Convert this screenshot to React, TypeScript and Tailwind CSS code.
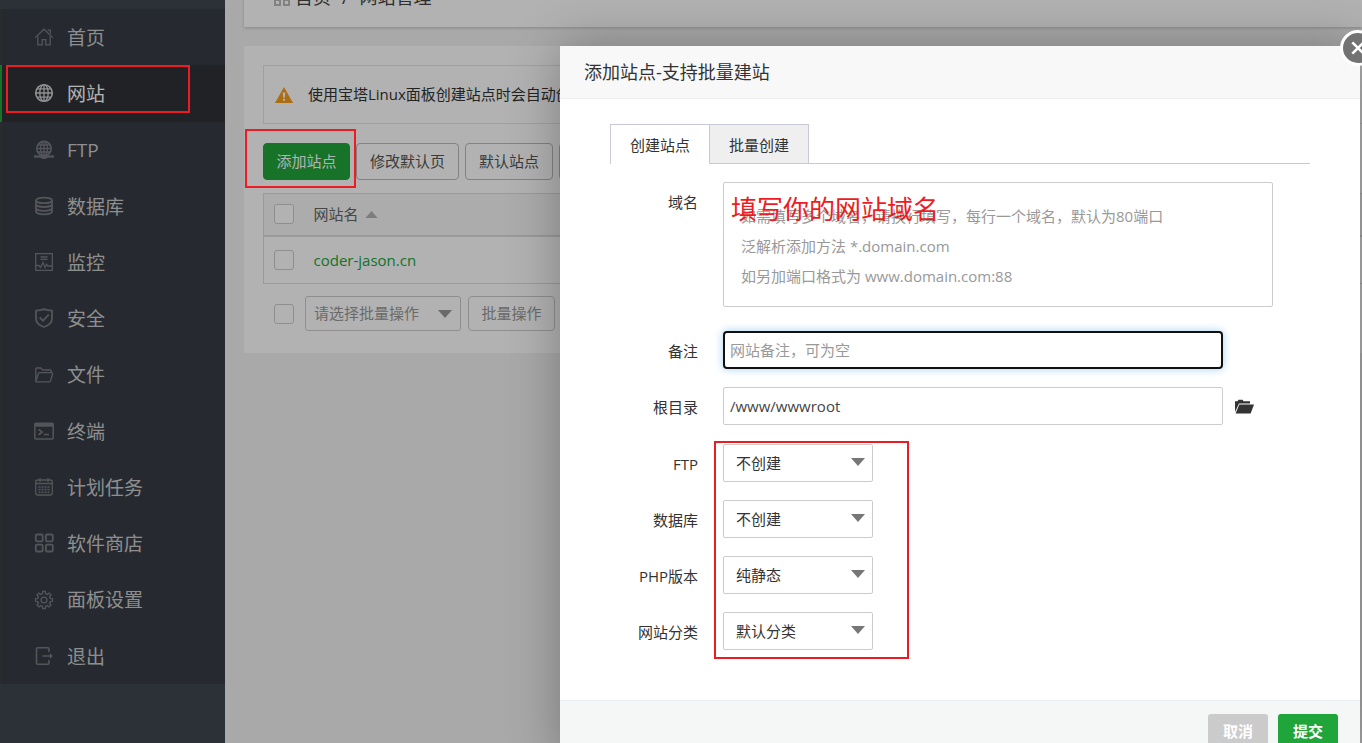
import React from "react";

type IconProps = { children: React.ReactNode };

function Icon({ children }: IconProps) {
  return (
    <svg
      aria-hidden="true"
      viewBox="0 0 20 20"
      className="size-5 shrink-0"
      fill="none"
      stroke="currentColor"
      strokeWidth="1.3"
    >
      {children}
    </svg>
  );
}

const menu: { label: string; icon: React.ReactNode; active?: boolean }[] = [
  {
    label: "首页",
    icon: (
      <>
        <path d="M1.2 10.6 10 2.2l8.8 8.4M3.8 9.4v8.4h4.4v-5.2h3.6v5.2h4.4V9.4M13.6 3.2h2.8v3.6" />
      </>
    ),
  },
  {
    label: "网站",
    active: true,
    icon: (
      <>
        <circle cx="10" cy="10" r="8.3" strokeWidth="1.6" />
        <ellipse cx="10" cy="10" rx="4.2" ry="8.3" />
        <path d="M10 1.7v16.6M1.7 10h16.6M3 5.9h14M3 14.1h14" />
      </>
    ),
  },
  {
    label: "FTP",
    icon: (
      <>
        <circle cx="10" cy="8.5" r="7.2" strokeWidth="1.6" />
        <ellipse cx="10" cy="8.5" rx="3.5" ry="7.2" />
        <path d="M10 1.3v14M2.8 8.5h14.4M4 5h12M4 12h12" />
        <path d="M0 16.5h20" strokeWidth="2.2" />
        <ellipse cx="10" cy="16.7" rx="2.8" ry="1.6" fill="currentColor" />
      </>
    ),
  },
  {
    label: "数据库",
    icon: (
      <g strokeWidth="1.8">
        <ellipse cx="10" cy="4.4" rx="8" ry="2.8" />
        <path d="M2 4.4v11.2c0 1.6 3.6 2.8 8 2.8s8-1.2 8-2.8V4.4M2 8.2C2 9.8 5.6 11 10 11s8-1.2 8-2.8M2 12c0 1.6 3.6 2.8 8 2.8s8-1.2 8-2.8" />
      </g>
    ),
  },
  {
    label: "监控",
    icon: (
      <>
        <path d="M1.7 1.7h16.6v16.6H1.7z" />
        <path d="M6.5 5h7M6.5 7.3h7M2 13.5h3l1.5 2 2.5-5 2 5 1.5-3 1.3 1.5H18" />
      </>
    ),
  },
  {
    label: "安全",
    icon: (
      <g strokeWidth="1.8">
        <path d="M10 1.2c-2.3 1-5 1.4-8 1.5v8c0 4 3.6 6.8 8 8.3 4.4-1.5 8-4.3 8-8.3v-8c-3-.1-5.7-.5-8-1.5z" />
        <path d="m5.7 9.5 3.3 3.2 5.8-6" />
      </g>
    ),
  },
  {
    label: "文件",
    icon: (
      <path d="M1.8 16.5V4.2c0-.7.4-1.2 1-1.2h4l2 2h7.4c.6 0 1 .4 1 1v1.5M1.8 16.5 4.3 8.6c.2-.7.6-1 1.2-1h12.2c.8 0 1.1.5.9 1.2l-2 7c-.2.7-.6 1-1.2 1H2.6c-.6 0-.8-.1-.8-.3z" />
    ),
  },
  {
    label: "终端",
    icon: (
      <>
        <rect x=".8" y="2.3" width="18.4" height="15.6" rx="1" strokeWidth="1.5" />
        <path d="M1 4h18" strokeWidth="3.4" />
        <path d="m4.5 8.3 3.7 2.7-3.7 2.8M10 13.5h5" strokeWidth="1.6" />
      </>
    ),
  },
  {
    label: "计划任务",
    icon: (
      <>
        <rect x="1.7" y="3" width="16.6" height="15" rx="2" />
        <path d="M2 6.5h16M6 1v4M14 1v4" />
        <path d="M4.5 10h11M4.5 12.6h11M4.5 15.2h11" strokeWidth="1.5" strokeDasharray="2 1" />
      </>
    ),
  },
  {
    label: "软件商店",
    icon: (
      <g strokeWidth="1.8">
        <rect x="1.8" y="1.5" width="6.9" height="6.9" rx="1.3" />
        <rect x="11.9" y="1.5" width="6.9" height="6.9" rx="1.3" />
        <rect x="1.8" y="11.6" width="6.9" height="6.9" rx="1.3" />
        <rect x="11.9" y="11.6" width="6.9" height="6.9" rx="1.3" />
      </g>
    ),
  },
  {
    label: "面板设置",
    icon: (
      <>
        <path d="M8.3 3.8 8.7 1.5h2.6l.4 2.3 1.5.6 1.9-1.3L17 5l-1.4 1.9.6 1.4 2.3.4v2.6l-2.3.4-.6 1.5L17 15l-1.9 1.9-1.9-1.3-1.5.6-.4 2.3H8.7l-.4-2.3-1.5-.6-1.9 1.3L3 15l1.4-1.8-.6-1.5-2.3-.4V8.7l2.3-.4.6-1.4L3 5l1.9-1.9 1.9 1.3z" />
        <circle cx="10" cy="10" r="2.9" />
      </>
    ),
  },
  {
    label: "退出",
    icon: (
      <g strokeWidth="1.6">
        <path d="M15 6V3c0-.7-.4-1.2-1.2-1.2H3.7c-.8 0-1.2.5-1.2 1.2v14c0 .8.4 1.2 1.2 1.2h10.1c.8 0 1.2-.4 1.2-1.2v-3M8.5 10h9" />
        <path d="m15.8 7 3.2 3-3.2 3z" fill="currentColor" stroke="none" />
      </g>
    ),
  },
];

function Caret({ up = false, className = "" }: { up?: boolean; className?: string }) {
  return (
    <svg aria-hidden="true" viewBox="0 0 14 8" className={className} fill="currentColor">
      <path d={up ? "M0 8 7 0l7 8z" : "M0 0h14L7 8z"} />
    </svg>
  );
}

function Sidebar() {
  return (
    <nav className="w-[225px] shrink-0 bg-[#40454f] pt-[9px]">
      <ul className="grid h-[675px] grid-rows-12 bg-[#373d46]">
        {menu.map((m) => (
          <li key={m.label} className="grid">
            <a
              href="#"
              className={
                m.active
                  ? "flex items-center gap-[13px] border-l-2 border-[#20a53a] bg-[#2e3137] pl-8 text-[19px] text-white"
                  : "flex items-center gap-[13px] border-l-2 border-[#3c403f] pl-8 text-[19px] text-[#cccccc]"
              }
            >
              <span className={m.active ? "text-[#d0d0d0]" : "text-[#787a7e]"}>
                <Icon>{m.icon}</Icon>
              </span>
              <span className="pt-[2px]">{m.label}</span>
            </a>
          </li>
        ))}
      </ul>
    </nav>
  );
}

function Check({ label }: { label: string }) {
  return (
    <input
      type="checkbox"
      aria-label={label}
      className="block size-5 shrink-0 appearance-none rounded-[3px] border border-[#cccccc] bg-white"
    />
  );
}

function SitePage() {
  const button = "h-[37px] shrink-0 rounded-[4px] border border-[#bbbbbb] px-[13px] text-[15px] text-[#555555]";
  return (
    <main className="min-w-0 flex-1 overflow-hidden bg-[#f2f2f2] pl-[19px]">
      <div className="-mt-8 flex h-[59px] items-center bg-white pl-[30px] text-[18px] text-[#444444] shadow-[0_1px_3px_rgba(0,0,0,0.2)]">
        <svg aria-hidden="true" viewBox="0 0 16 16" className="mr-[5px] size-4" fill="none" stroke="#bbbbbb" strokeWidth="2">
          <rect x="1" y="1" width="5" height="5" />
          <rect x="10" y="1" width="5" height="5" />
          <rect x="1" y="10" width="5" height="5" />
          <rect x="10" y="10" width="5" height="5" />
        </svg>
        <a href="#">首页</a>
        <span className="mx-[11px]">/</span>
        <span>网站管理</span>
      </div>
      <section className="mt-[19px] bg-white pt-[19px] pb-[22px] pl-[19px]">
        <div className="flex h-[59px] items-center gap-[15px] border border-r-0 border-[#e6e6e6] pl-[11px] text-[15px] whitespace-nowrap text-[#333333]">
          <svg aria-hidden="true" viewBox="0 0 18 16" className="h-4 w-[18px] shrink-0">
            <path d="M9 0 18 16H0z" fill="#f79e1b" />
            <path d="M7.6 5.5h2.8l-.7 5.2H8.3zM8 11.8h2v2H8z" fill="#ffffff" />
          </svg>
          <p>使用宝塔Linux面板创建站点时会自动创建权限相同的FTP账号</p>
        </div>
        <div className="mt-[19px] flex gap-[6px]">
          <button className="h-[37px] w-[87px] shrink-0 rounded-[4px] border border-[#20a53a] bg-[#20a53a] text-[15px] text-white">
            添加站点
          </button>
          <button className={button}>修改默认页</button>
          <button className={button}>默认站点</button>
          <button className={button}>分类管理</button>
        </div>
        <table className="mt-[13px] w-full border-collapse border border-r-0 border-[#dddddd] text-left text-[15px]">
          <thead>
            <tr className="h-[42px] border-b-2 border-[#dddddd] bg-[#f6f6f6] text-[#666666]">
              <th className="w-10 pl-[10px]">
                <Check label="全选网站" />
              </th>
              <th className="pl-[10px] font-normal">
                <span className="flex items-center gap-[6px]">
                  网站名
                  <Caret up className="h-[7px] w-[13px] text-[#b4b4b4]" />
                </span>
              </th>
            </tr>
          </thead>
          <tbody>
            <tr className="h-[48px]">
              <td className="w-10 pl-[10px]">
                <Check label="选择 coder-jason.cn" />
              </td>
              <td className="pl-[10px]">
                <a href="#" className="text-[#20a53a]">
                  coder-jason.cn
                </a>
              </td>
            </tr>
          </tbody>
        </table>
        <div className="mt-3 flex items-center pl-[11px]">
          <Check label="批量选择" />
          <div className="relative ml-[11px]">
            <select
              aria-label="批量操作类型"
              className="h-[35px] w-[156px] appearance-none rounded-[3px] border border-[#cccccc] bg-white pl-2 text-[15px] text-[#999999]"
            >
              <option>请选择批量操作</option>
            </select>
            <Caret className="pointer-events-none absolute top-[14px] right-[9px] h-2 w-[14px] text-[#999999]" />
          </div>
          <button className="ml-[7px] h-[35px] w-[87px] rounded-[4px] border border-[#cccccc] text-[15px] text-[#999999]">
            批量操作
          </button>
        </div>
      </section>
    </main>
  );
}

function Row({ label, id, children }: { label: string; id: string; children: React.ReactNode }) {
  return (
    <div className="flex items-start">
      <label htmlFor={id} className="w-[138px] shrink-0 pt-2 text-right text-[15px] leading-6">
        {label}
      </label>
      <div className="ml-[25px] flex min-w-0 flex-1 items-center">{children}</div>
    </div>
  );
}

const selects = [
  { id: "ftp", label: "FTP", value: "不创建" },
  { id: "database", label: "数据库", value: "不创建" },
  { id: "php", label: "PHP版本", value: "纯静态" },
  { id: "category", label: "网站分类", value: "默认分类" },
];

function AddSiteDialog() {
  return (
    <section
      role="dialog"
      aria-label="添加站点"
      className="relative w-[800px] bg-white text-[15px] text-[#333333] shadow-[1px_1px_50px_rgba(0,0,0,0.3)]"
    >
      <h2 className="flex h-[53px] items-center border-b border-[#eeeeee] bg-[#f8f8f8] px-6 text-[18px]">
        添加站点-支持批量建站
      </h2>
      <button aria-label="关闭" className="absolute -top-4 -right-4 size-9">
        <svg viewBox="0 0 36 36" className="size-9">
          <circle cx="18" cy="18" r="16.5" fill="#737373" stroke="#ffffff" strokeWidth="3" />
          <path d="m12.3 12.3 11.4 11.4M23.7 12.3 12.3 23.7" stroke="#ffffff" strokeWidth="2.6" />
        </svg>
      </button>

      <div className="mx-[50px] mt-[25px] flex">
        <button className="h-10 w-[99px] border-t border-l border-[#c9c8d6] pt-[2px]">创建站点</button>
        <button className="h-10 w-[100px] border border-[#c9c8d6] bg-[#efefef] pt-[2px]">批量创建</button>
        <span className="flex-1 border-b border-[#c9c8d0]" />
      </div>

      <form className="pt-[18px]" onSubmit={(e) => e.preventDefault()}>
        <div className="relative">
          <Row id="domain" label="域名">
            <textarea
              id="domain"
              placeholder={
                "如需填写多个域名，请换行填写，每行一个域名，默认为80端口\n泛解析添加方法 *.domain.com\n如另加端口格式为 www.domain.com:88"
              }
              className="block h-[125px] w-[550px] resize-none overflow-hidden rounded-[2px] border border-[#cccccc] px-[17px] pt-[18px] leading-[30px] placeholder:text-[#999999]"
            />
          </Row>
          <p className="pointer-events-none absolute top-[7px] left-[171px] text-[26px] leading-10 text-[#ed1c24]">
            填写你的网站域名
          </p>
        </div>

        <div className="mt-6 grid gap-[18px]">
          <Row id="remark" label="备注">
            <input
              id="remark"
              placeholder="网站备注，可为空"
              className="h-[38px] w-[500px] rounded-[4px] border-2 border-[#101010] px-[5px] shadow-[0_0_9px_rgba(102,175,233,0.6)] outline-none placeholder:text-[#999999]"
            />
          </Row>
          <Row id="root-dir" label="根目录">
            <input
              id="root-dir"
              defaultValue="/www/wwwroot"
              className="h-[38px] w-[500px] rounded-[2px] border border-[#cccccc] px-[6px] text-[#444444]"
            />
            <button type="button" aria-label="选择目录" className="ml-3">
              <svg viewBox="0 0 19 15" className="h-[15px] w-[19px]" fill="#333333">
                <path d="M0 13V2.2h2.5L3.5.8h4l1 1.4H15v2.3H4z" />
                <path d="M4.3 5.6H19L15.6 14.5H.6z" />
              </svg>
            </button>
          </Row>
          <div className="relative grid gap-[18px] pt-px">
            {selects.map((s) => (
              <Row key={s.id} id={s.id} label={s.label}>
                <div className="relative">
                  <select
                    id={s.id}
                    className="block h-[38px] w-[150px] appearance-none rounded-[2px] border border-[#cccccc] bg-white pl-3"
                  >
                    <option>{s.value}</option>
                  </select>
                  <Caret className="pointer-events-none absolute top-[14px] right-2 h-2 w-[14px] text-[#777777]" />
                </div>
              </Row>
            ))}
            <span className="pointer-events-none absolute -top-[2px] -bottom-[9px] left-[154px] w-[195px] border-2 border-[#ed1c24]" />
          </div>
        </div>
      </form>

      <footer className="mt-[50px] flex justify-end gap-[10px] border-t border-[#edf0f0] bg-[#f5f7f7] px-[22px] py-[13px] font-bold text-white">
        <button className="h-[35px] w-[60px] rounded-[3px] bg-[#cbcbcb]">取消</button>
        <button className="h-[35px] w-[60px] rounded-[3px] bg-[#20a53a]">提交</button>
      </footer>
    </section>
  );
}

export default function App() {
  return (
    <div className="relative flex h-screen overflow-hidden font-['Open_Sans','Noto_Sans_CJK_SC',sans-serif]">
      <Sidebar />
      <SitePage />
      <div className="absolute inset-0 flex items-start justify-end overflow-hidden bg-black/30 pt-[46px] pr-[2px]">
        <AddSiteDialog />
      </div>
      <span className="pointer-events-none absolute top-[65px] left-[6px] h-12 w-[184px] border-2 border-[#ed1c24]" />
      <span className="pointer-events-none absolute top-[129px] left-[245px] h-[59px] w-[111px] border-2 border-[#ed1c24]" />
    </div>
  );
}
